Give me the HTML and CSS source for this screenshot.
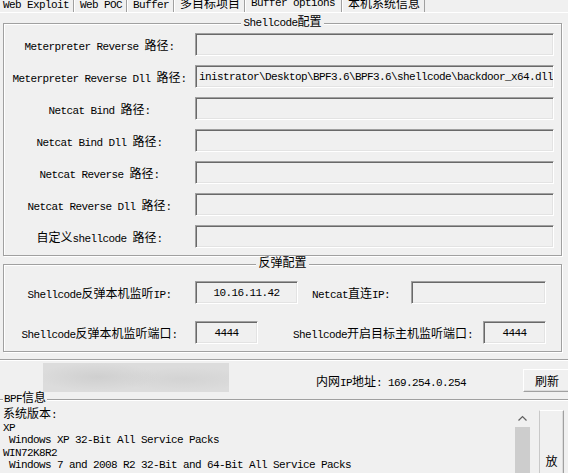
FILE: index.html
```html
<!DOCTYPE html>
<html>
<head>
<meta charset="utf-8">
<link rel="stylesheet" href="styles.css">
</head>
<body>
<div class="tabs">
  <div class="tab first">Web Exploit</div>
  <div class="tab">Web POC</div>
  <div class="tab">Buffer</div>
  <div class="tab"><span class="c">多目标项目</span></div>
  <div class="tab sel">Buffer options</div>
  <div class="tab"><span class="c">本机系统信息</span></div>
</div>

<fieldset class="group g1">
  <legend>Shellcode<span class="c">配置</span></legend>
  <div class="rows rows1">
    <div class="row"><div class="lbl">Meterpreter Reverse <span class="c">路径</span>:</div><div class="field wide"></div></div>
    <div class="row"><div class="lbl">Meterpreter Reverse Dll <span class="c">路径</span>:</div><div class="field wide">inistrator\Desktop\BPF3.6\BPF3.6\shellcode\backdoor_x64.dll</div></div>
    <div class="row"><div class="lbl">Netcat Bind <span class="c">路径</span>:</div><div class="field wide"></div></div>
    <div class="row"><div class="lbl">Netcat Bind Dll <span class="c">路径</span>:</div><div class="field wide"></div></div>
    <div class="row"><div class="lbl">Netcat Reverse <span class="c">路径</span>:</div><div class="field wide"></div></div>
    <div class="row"><div class="lbl">Netcat Reverse Dll <span class="c">路径</span>:</div><div class="field wide"></div></div>
    <div class="row"><div class="lbl"><span class="c">自定义</span>shellcode <span class="c">路径</span>:</div><div class="field wide"></div></div>
  </div>
</fieldset>

<fieldset class="group g2">
  <legend><span class="c">反弹配置</span></legend>
  <div class="rows rows2">
    <div class="row">
      <div class="lbl">Shellcode<span class="c">反弹本机监听</span>IP:</div>
      <div class="field ip center">10.16.11.42</div>
      <div class="lbl2 nc">Netcat<span class="c">直连</span>IP:</div>
      <div class="field ncip"></div>
    </div>
    <div class="row">
      <div class="lbl">Shellcode<span class="c">反弹本机监听端口</span>:</div>
      <div class="field port center">4444</div>
      <div class="lbl2 tgt">Shellcode<span class="c">开启目标主机监听端口</span>:</div>
      <div class="field port center">4444</div>
    </div>
  </div>
</fieldset>

<div class="sep"></div>

<div class="ipbar">
  <div class="blur"></div>
  <div class="iptext"><span class="c">内网</span>IP<span class="c">地址</span>: 169.254.0.254</div>
  <div class="btn refresh"><span class="c">刷新</span></div>
</div>

<fieldset class="info">
  <legend>BPF<span class="c">信息</span></legend>
  <div class="infobody">
    <div class="log">
      <div class="ln"><span class="c">系统版本</span>:</div>
      <div class="ln">XP</div>
      <div class="ln"> Windows XP 32-Bit All Service Packs</div>
      <div class="ln">WIN72K8R2</div>
      <div class="ln"> Windows 7 and 2008 R2 32-Bit and 64-Bit All Service Packs</div>
    </div>
    <div class="vscroll">
      <div class="arrow"><svg width="15" height="16" viewBox="0 0 15 16"><polyline points="3.5,9.5 7.5,5.5 11.5,9.5" fill="none" stroke="#606060" stroke-width="1.2"/></svg></div>
      <div class="thumb"></div>
    </div>
    <div class="btn fang"><span class="c">放</span></div>
  </div>
</fieldset>
</body>
</html>
```

FILE: styles.css
```css
html, body {
  margin: 0;
  padding: 0;
}
body {
  background: #f0f0f0;
  width: 568px;
  height: 473px;
  overflow: hidden;
  font-family: "Liberation Mono", "Noto Sans CJK SC", monospace;
  font-size: 11px;
  letter-spacing: -0.6px;
  line-height: 12px;
  color: #000;
}
.c {
  font-family: "Noto Sans CJK SC", sans-serif;
  font-size: 12px;
  letter-spacing: 0;
  line-height: 0;
}

/* tabs */
.tabs {
  display: flex;
  align-items: flex-start;
  height: 12px;
  border-bottom: 1px solid #fff;
  overflow: hidden;
}
.tab {
  padding: 0 4px 0 5px;
  border-left: 1px solid #fff;
  border-right: 1px solid #a0a0a0;
  line-height: 11px;
  height: 12px;
  white-space: nowrap;
}
.tab.first {
  padding-left: 3px;
  border-left: 0;
}
.tab.sel {
  line-height: 7px;
  padding: 0 6px 0 5px;
}

/* group boxes */
.group {
  border: 1px solid #a0a0a0;
  box-shadow: 1px 1px 0 #fff, inset 1px 1px 0 #fff;
  min-width: 0;
}
.group legend {
  margin: 0 auto;
  padding: 0 2px;
  line-height: 12px;
  background: #f0f0f0;
  white-space: nowrap;
}
.g1 {
  margin: 4px 6px 0 3px;
  padding: 4px 0 7px 0;
}
.g2 {
  margin: 2px 6px 0 3px;
  padding: 11px 0 7px 0;
}
.rows {
  display: flex;
  flex-direction: column;
}
.rows1 { gap: 9px; }
.rows2 { gap: 17px; }
.row {
  display: flex;
  align-items: center;
  height: 23px;
}
.lbl {
  width: 191px;
  flex: none;
  text-align: center;
  padding-top: 5px;
  white-space: nowrap;
}
.lbl2 {
  flex: none;
  padding-top: 5px;
  white-space: nowrap;
}
.nc { margin: 0 21px 0 14px; }
.tgt { margin: 0 10px 0 35px; }

.field {
  flex: none;
  box-sizing: border-box;
  height: 23px;
  border: 1px solid;
  border-color: #a0a0a0 #fff #fff #a0a0a0;
  box-shadow: inset 1px 1px 0 #696969, inset -1px -1px 0 #e3e3e3;
  background: #f0f0f0;
  line-height: 22px;
  padding-left: 3px;
  white-space: nowrap;
  overflow: hidden;
}
.field.center {
  text-align: center;
  padding-left: 0;
}
.wide { width: 359px; }
.ip { width: 103px; }
.ncip { width: 135px; }
.port { width: 63px; }

/* separator & ip bar */
.sep {
  margin-top: 7px;
  border-top: 1px solid #a0a0a0;
  border-bottom: 1px solid #fff;
}
.ipbar {
  display: flex;
  align-items: flex-start;
  height: 32px;
}
.blur {
  flex: none;
  margin: 2px 0 0 43px;
  width: 186px;
  height: 29px;
  background:
    radial-gradient(ellipse 60px 14px at 55px 14px, #cfcfcf, rgba(207,207,207,0)),
    radial-gradient(ellipse 70px 12px at 140px 16px, #d3d3d3, rgba(211,211,211,0)),
    #dcdcdc;
}
.iptext {
  flex: none;
  margin: 16px 0 0 87px;
  white-space: nowrap;
}
.btn {
  box-sizing: border-box;
  flex: none;
  border: 1px solid;
  border-color: #fff #a0a0a0 #a0a0a0 #fff;
  box-shadow: inset -1px -1px 0 #dcdcdc;
  background: #f0f0f0;
  text-align: center;
}
.refresh {
  margin: 8px 0 0 57px;
  width: 48px;
  height: 23px;
  padding-top: 7px;
  line-height: 12px;
}

/* info group */
.info {
  margin: 0 -10px 0 -2px;
  padding: 4px 0 0 4px;
  border: 1px solid #a0a0a0;
  box-shadow: inset 0 1px 0 #fff;
  min-width: 0;
}
.info legend {
  padding: 0 1px;
  line-height: 12px;
  background: #f0f0f0;
  white-space: nowrap;
}
.infobody {
  display: flex;
  align-items: flex-start;
}
.log {
  width: 512px;
  flex: none;
  line-height: 12.5px;
}
.ln {
  white-space: pre;
  height: 12.5px;
}
.vscroll {
  flex: none;
  width: 15px;
  margin-top: 2px;
  display: flex;
  flex-direction: column;
}
.arrow {
  height: 16px;
}
.arrow svg { display: block; }
.thumb {
  height: 80px;
  background: #cdcdcd;
}
.fang {
  margin: 1px 0 0 9px;
  width: 25px;
  height: 104px;
  padding-top: 46px;
  line-height: 12px;
  border-color: #fff #a0a0a0 #a0a0a0 #c8c8c8;
}
```
